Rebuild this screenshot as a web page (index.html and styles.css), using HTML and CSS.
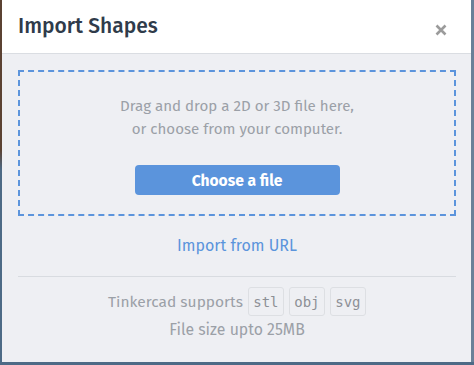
FILE: index.html
```html
<!DOCTYPE html>
<html>
<head>
<meta charset="utf-8">
<link rel="stylesheet" href="styles.css">
</head>
<body>
<div class="backdrop">
  <div class="dialog">
    <div class="header">
      <h1 class="title">Import Shapes</h1>
      <span class="close">
        <svg width="12" height="12" viewBox="0 0 12 12"><path d="M1.5 1.5 L10.5 10.5 M10.5 1.5 L1.5 10.5" stroke="#9b9b9b" stroke-width="2.6" stroke-linecap="butt"/></svg>
      </span>
    </div>
    <div class="body">
      <div class="dropzone">
        <p class="hint">Drag and drop a 2D or 3D file here,<br>or choose from your computer.</p>
        <button class="choose">Choose a file</button>
      </div>
      <a class="url">Import from URL</a>
      <div class="divider"></div>
      <div class="supports">
        <span>Tinkercad supports</span>
        <code class="chip">stl</code>
        <code class="chip">obj</code>
        <code class="chip">svg</code>
      </div>
      <p class="size">File size upto 25MB</p>
    </div>
  </div>
</div>
</body>
</html>
```

FILE: styles.css
```css
* { box-sizing: border-box; }
html, body { margin: 0; padding: 0; }
body {
  width: 474px;
  height: 365px;
  overflow: hidden;
  font-family: "Fira Sans", "Noto Sans", "Open Sans", sans-serif;
  background: linear-gradient(180deg, #5b4233 0px, #5b4233 150px, #4d6a86 170px, #4d6a86 100%);
}
.backdrop {
  display: flex;
  padding-left: 2px;
  background: linear-gradient(90deg, transparent 0, transparent 471px, #6a8098 471px);
}
.dialog {
  width: 469px;
  height: 362px;
  background: #eeeff3;
  display: flex;
  flex-direction: column;
}
.header {
  height: 54px;
  background: #ffffff;
  border-bottom: 1px solid #dadde2;
  display: flex;
  align-items: center;
  justify-content: space-between;
  padding: 0 24px 0 16px;
}
.title {
  margin: 0;
  font-size: 21px;
  font-weight: 500;
  color: #2f3b4a;
  padding-bottom: 2px;
}
.close {
  display: flex;
  margin-top: 6px;
}
.body {
  padding: 16px 15px 0 16px;
  display: flex;
  flex-direction: column;
  align-items: stretch;
}
.dropzone {
  height: 146px;
  border: 2px dashed #5c94dc;
  display: flex;
  flex-direction: column;
  align-items: center;
  padding-top: 23px;
}
.hint {
  margin: 0;
  text-align: center;
  font-size: 15.1px;
  line-height: 23px;
  color: #9ba0a7;
}
.choose {
  margin-top: 24px;
  width: 205px;
  height: 30px;
  border: none;
  border-radius: 4px;
  background: #5b94dc;
  color: #ffffff;
  font-family: inherit;
  font-size: 15.6px;
  font-weight: 700;
  padding: 0;
}
.url {
  margin-top: 20px;
  text-align: center;
  font-size: 16px;
  line-height: 20px;
  color: #5b94dc;
}
.divider {
  margin-top: 20px;
  height: 1px;
  background: #d8dbe0;
}
.supports {
  margin-top: 10px;
  display: flex;
  justify-content: center;
  align-items: center;
  gap: 5px;
  font-size: 15.5px;
  color: #9ba0a7;
}
.chip {
  font-family: "DejaVu Sans Mono", "Liberation Mono", monospace;
  font-size: 14px;
  color: #8d9096;
  border: 1px solid #dddfe3;
  border-radius: 3px;
  width: 36px;
  height: 29px;
  display: flex;
  align-items: center;
  justify-content: center;
}
.size {
  margin: 4px 0 0;
  text-align: center;
  font-size: 15.8px;
  line-height: 20px;
  color: #9ba0a7;
}
```
